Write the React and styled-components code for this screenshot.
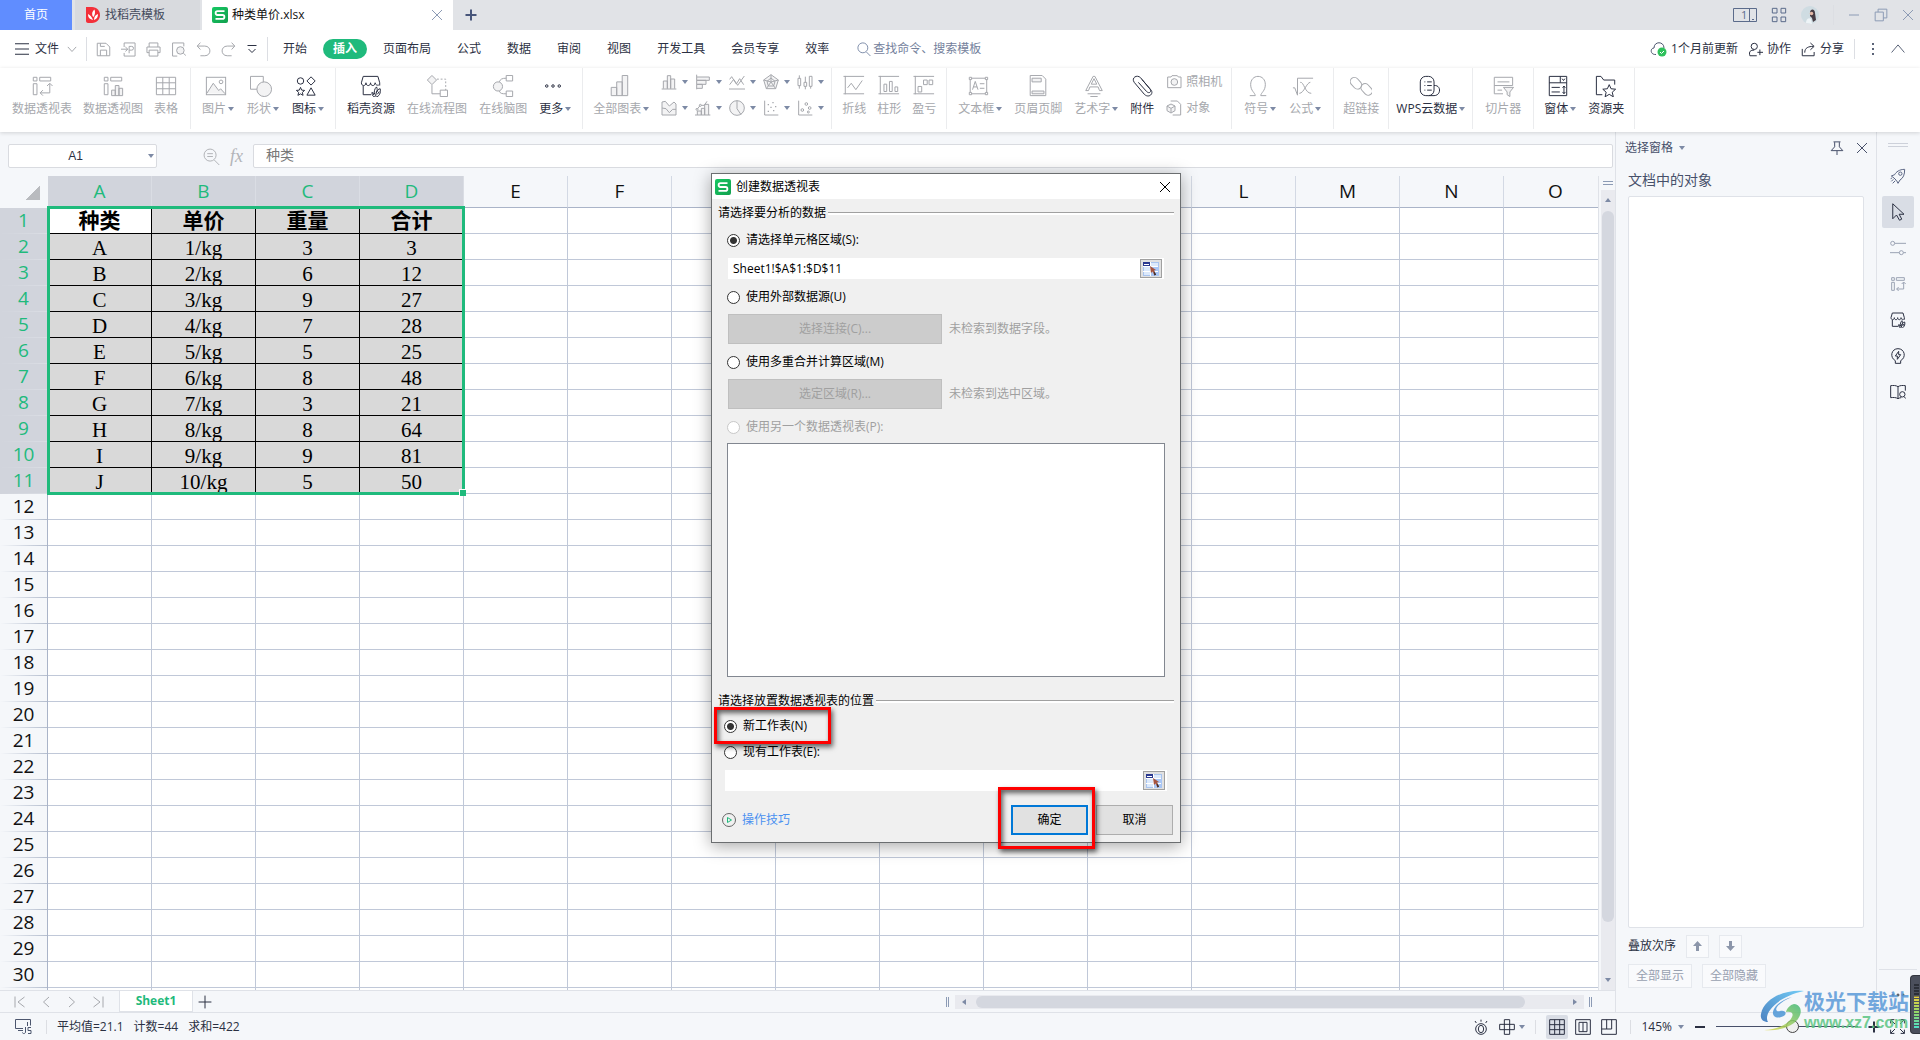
import React from 'react';
import styled, { createGlobalStyle, css } from 'styled-components';

const GREEN = '#1fba7c';
const DARK = '#2b3042';
const DIM = '#a6a8ad';

const rows = [
    ['种类', '单价', '重量', '合计'],
    ['A', '1/kg', '3', '3'],
    ['B', '2/kg', '6', '12'],
    ['C', '3/kg', '9', '27'],
    ['D', '4/kg', '7', '28'],
    ['E', '5/kg', '5', '25'],
    ['F', '6/kg', '8', '48'],
    ['G', '7/kg', '3', '21'],
    ['H', '8/kg', '8', '64'],
    ['I', '9/kg', '9', '81'],
    ['J', '10/kg', '5', '50'],
];
const columns = 'ABCDEFGHIJKLMNO'.split('');
const ROW_COUNT = 30;

const GlobalStyle = createGlobalStyle`
    * { box-sizing: border-box; }
    body {
        margin: 0;
        font-family: "Open Sans", "Noto Sans CJK SC", sans-serif;
        font-size: 12px;
        line-height: 16px;
        color: ${DARK};
        background: #f5f7fa;
        overflow: hidden;
    }
    button, input { font: inherit; color: inherit; }
    button {
        border: 0;
        padding: 0;
        margin: 0;
        background: none;
        white-space: nowrap;
    }
    a { text-decoration: none; }
    svg { display: block; flex: none; }
`;

/* drawings, all on a 24 x 24 board */
const leaf = (
    <path d="M17 24c-3 0-4-2-4-5 1 0 2 1 3 2-1-3 0-6 2-8 1 2 1 4 0 6 1-2 2-4 4-4 1 4-1 9-5 9zM17 23l1-5M15 22l-1-2M19 21l2-3" />
);
const icons = {
    pivot: <path d="M2.5 2.5h4v4h-4zM9.5 2.5h12v4h-12zM2.5 9.5h4v12h-4zM10 19.5h10.500v-10M10 19.5l3-3M10 19.5l3 3M20.5 9l-3 3M20.5 9l3 3" />,
    pivotChart: <><path d="M2.5 2.5h4v4h-4zM9.5 2.5h12v4h-12zM2.5 9.5h4v12h-4z" /><path className="f" d="M10.5 16.5h4v6h-4zM14.5 11.5h4v11h-4zM18.5 14.5h4v8h-4z" /></>,
    table: <path d="M1.5 2.5h21v19h-21zM1.5 8.5h21M1.5 15h21M8.5 2.5v19M15.5 2.5v19" />,
    picture: <><rect x="1.5" y="2.5" width="21" height="19" /><path className="f" d="M2 20l7-11 6 8 2-2 5 5.500" /><circle cx="17.5" cy="7.5" r="2" /></>,
    shape: <><path d="M.5 1.5h14v14h-14z" /><circle className="f" cx="15.5" cy="15.5" r="8" /></>,
    symbols: <><circle cx="6" cy="6.5" r="3.5" /><path d="M17.5 2l4.500 4.500-4.500 4.500-4.500-4.500zM6 13.5l1.300 3 3.200.3-2.500 2.200.8 3.200L6 20.6l-2.800 1.600.8-3.200-2.500-2.200 3.200-.3zM17.5 14l4.500 8h-9z" /></>,
    store: <><path d="M12 21.5H3.5V12M1.5 8.5l2-7h16l2 7v3M1.5 8.5c0 4 5 4 5 0 0 4 5 4 5 0 0 4 5 4 5 0 0 2 2 3 4 2.500" />{leaf}</>,
    flow: <><path className="f" d="M6.5 .5l5 5-5 5-5-5z" /><path strokeDasharray="2 2" d="M12 4.5h9.500v12" /><path d="M6.5 11v9.500h9M15.5 16.5h8v7h-8z" /></>,
    mind: <><circle className="f" cx="6.5" cy="12.5" r="5" /><path d="M8 7.5c1-3 3-4 7.500-4M8 17.5c1 3 3 3 7.500 3M15.5 .5h7v6h-7zM15.5 17.5h7v6h-7z" /></>,
    more: <><circle cx="4.5" cy="12" r="1.500" /><circle cx="12" cy="12" r="1.500" /><circle cx="19.5" cy="12" r="1.500" /></>,
    charts: <path className="f" d="M3.5 13.5h6v9h-6zM9.5 7.5h6v15h-6zM15.5 .5h6v22h-6z" />,
    line: <path d="M.5 1.5h22.500M2.5 1v20M.5 20.5h22.500M5 14l4-5 5 7 7-10" />,
    column: <path d="M.5 1.5h22.500M2.5 1v20M.5 20.5h22.500M6.5 18v-8h3v8zM12.5 18v-11h3v11zM18.5 18v-5h3v5z" />,
    winloss: <path d="M.5 1.5h22.500M2.5 1v20M.5 20.5h22.500M5.5 12.5h4v6h-4zM11.5 5.5h4v5h-4zM17.5 5.5h4v5h-4z" />,
    textbox: <><path d="M3.5 3.5h18v17h-18z" /><path className="w" d="M2.5 2.5H5V5H2.5zM20 2.5h2.500V5H20zM2.5 19H5v2.500H2.5zM20 19h2.500v2.500H20z" /><path d="M6 16l3-9 3 9M7 13h4M14 9.5h5M14 14.5h5" /></>,
    header: <><path d="M3.5 .5h13l4 4v18h-17z" /><path className="f" d="M5.5 3.5h10v4h-10zM5.5 17.5h13v3h-13z" /></>,
    wordart: <path d="M3 17L11 1.5h2L21 17h-3l-1.500-4h-9L6 17zM9 10h6l-3-6zM5 20.5h14M8 23.5h8" />,
    clip: <path d="M8 8l9 10c3 3 6 0 3.500-3L10.5 3C6.5-1 0 3 3.500 8l11 13c5 5 11-1 7-5L12 5" />,
    omega: <path d="M3 22.5h6c0-3-5-5-5-12C4 5 7.5 1.500 12 1.500S20 5 20 10.5c0 7-5 9-5 12h6" />,
    formula: <path d="M1 14h2l3 8V3.500h17M9 8c4-1 5 12 12 12M20 8c-4 0-7 12-12 12" />,
    link: <><rect x="2" y="2" width="9" height="14" rx="4.500" transform="rotate(-42 6.500 9)" /><rect x="13" y="9" width="9" height="14" rx="4.500" transform="rotate(-42 17.500 15)" /></>,
    cloudData: <><rect x="2.5" y="1.5" width="15" height="21" rx="6" /><path d="M17.5 11.5c8-1 8 11 0 11h-6M7 7.5h1M10 7.5h5M7 11.5h1M10 11.5h5M7 16.5h1M10 16.5h5" /></>,
    slicer: <><path d="M12 20.5H2.500V2.500h20v9M6 7.5h13M2.5 11.5h20M6 16.5h5" /><path className="f" d="M12.5 13.5h11l-4 5v5l-3-2v-3z" /></>,
    form: <path d="M2.5 1.5h19v21h-19zM2.5 8.5h19M14.5 1.5v7M16.5 4l1.500 2 1.500-2M5 13.5h9M5 18.5h9M18.5 12v8M17 14l1.500-2 1.500 2M17 18.5l1.500 2 1.500-2" />,
    folder: <><path d="M8 21.5H1.500V1.500h5l3 4h12v5" /><path d="M15.5 10.5l2 4.500 5 .5-3.700 3.300 1.200 5-4.500-2.700-4.500 2.700 1.200-5-3.700-3.300 5-.5z" /></>,
    camera: <><path d="M2.5 4.5h5l1.500-2h8l1.500 2h4v16h-20z" /><circle className="f" cx="12.5" cy="12" r="5" /></>,
    object: <><path d="M7 1.500h10l5 5v16H10" /><path className="f" d="M7.500 6l6 3v7l-6 3.500-6-3.500V9zM1.500 9l6 3.500 6-3.500M7.500 12.500V19" /></>,
    miniBar: <path className="f" d="M1 22.5h22M3.5 22V10.500h6V22M9.5 22V2.500h5V22M14.5 22V7.500h6V22" />,
    miniH: <path className="f" d="M2.5 1v22M3 4.5h18.500v5H3M3 9.500h13.500v6H3M3 15.5h8v6H3" />,
    miniLine: <path d="M0 22.5h24M1 16l6-8 6 9L23 3M1 8l3-4 7 11 5-8 6 9" />,
    radar: <><path className="f" d="M12 1l11 8-4 13H5L1 9z" /><path d="M12 6l6 5-2 7H8l-2-7zM12 1v11l11-3M12 12l7 10M12 12L5 22M12 12L1 9" /></>,
    stock: <path d="M1.5 6.5h4v11h-4zM3.5 2v4.500M3.5 17.5V22M10.5 12.5h4v6h-4zM12.5 4v8.500M12.5 18.5V23M18.5 3.5h4v15h-4zM20.5 18.5V22" />,
    area: <><path className="f" d="M1.5 22.5V3l5-1 6 7 7-6 3 3v16.500z" /><path d="M1.5 12l6 1 5 6 5-5h5" /></>,
    combo: <><path className="f" d="M3.5 22.5v-6h6v6M9.5 22.5v-10h5v10M14.5 22.5v-16h6v16" /><path d="M0 22.5h23M3 14l5-6h6l4-6" /><circle className="w" cx="3" cy="14" r="1.500" /><circle className="w" cx="8" cy="8" r="1.500" /></>,
    pie: <><circle className="f" cx="12" cy="12" r="11" /><path d="M12 1v12l6 9" /></>,
    scatter: <><path d="M2.5 1v21.500H23" /><path d="M7 7h2M14 4h2M11 11h2M18 10h2M7 17h2M15 16h2" strokeWidth="2" /></>,
    bubble: <><path d="M2.5 1v21.500H23" /><circle cx="8" cy="15" r="2" /><circle cx="14" cy="6" r="2" /><circle cx="19" cy="12" r="2" /><circle cx="17" cy="18" r="1.500" /></>,
    save: <path d="M2 2h14l6 6v14H2zM7 22v-9h10v9M7 2v5h7" />,
    exportPdf: <path d="M5 8V1.500h17.500v21H5v-5M0 11.500h10M7 8l4 3.500L7 15M13 18V7h4a3 3 0 010 6h-4" />,
    print: <path d="M5 8V1.500h14V8M5 17H1.500V8h21v9H19M5 13h14v9.500H5z" />,
    preview: <><path d="M10 22.500H2.500v-21h18V7M20 18l4 4" /><circle className="f" cx="15" cy="13.500" r="6" /></>,
    undo: <path d="M7 1L2 6.500 7 12M2 6.500h12c11 0 11 15.500 0 15.500H7" />,
    redo: <path d="M17 1l5 5.500-5 5.500M22 6.500H10c-11 0-11 15.500 0 15.500h7" />,
    quick: <path d="M3 5h18M5 12l7 7 7-7" />,
    burger: <path d="M0 3h24M0 12h24M0 21h24" />,
    down: <path d="M2 7l10 11L22 7" />,
    up: <path d="M1 18L12 5l11 13" />,
    search: <><circle cx="10" cy="10" r="8.500" /><path d="M16 17l7 7" /></>,
    zoomOut: <><circle cx="10" cy="10" r="8.500" /><path d="M16 17l7 7M6 8h8M6 12h8" /></>,
    person: <><circle cx="10" cy="7" r="5" /><path d="M14 22H3c-2-7 1-9 7-9M19 12v9M15 16.500h9" /></>,
    share: <path d="M2 11v11h19v-6M6 17c0-8 6-10 14-10M15 1.500l6 5.500-6 5.500" />,
    apps: <path d="M2 2h7v7H2zM15 2h7v7h-7zM2 15h7v7H2zM15 15h7v7h-7z" />,
    minimize: <path d="M2 12h20" />,
    restore: <path d="M2 7h14v15H2zM7 7V2h15v15h-6" />,
    close: <path d="M2 2l20 20M22 2L2 22" />,
    plus: <path d="M12 1v22M1 12h22" />,
    pin: <path d="M6 1.500h12M8 2v8l-6 6.500h20L16 10V2M12 17v7" />,
    rocket: <><path d="M22 2C14 2 9 6 7 10l-5 2 4 3 4 4 2 4 3-5c5-3 7-8 7-16zM5 17l-3 3M8 19l-4 4M1 16l2-1" /><circle cx="15.500" cy="8.500" r="2.500" /></>,
    pointer: <path d="M5 1v20l5-5 4 7 3-1.500-3.500-6.500H20z" />,
    sliders: <><circle cx="4" cy="5" r="3" /><path d="M7 5h17M0 19h14M20 19h4" /><circle cx="17" cy="19" r="3" /></>,
    bulb: <path d="M8 23v-4C-1 14 2 1 12 1s13 13 4 18v4zM13 5l-5 7h3v5l5-7h-3z" />,
    book: <><path d="M12 4C9 2 5 2 1 2.500v18c4-.5 8-.5 11 1.500V4c3-2 7-2 11-1.500V10M12 22c2-1 3-1.500 5-1.500" /><circle cx="18.500" cy="15.500" r="4" /><path d="M21 19l3 3" /></>,
    first: <path d="M2 1v22M21 2L8 12l13 10" />,
    prev: <path d="M18 2L7 12l11 10" />,
    next: <path d="M6 2l11 10L6 22" />,
    last: <path d="M22 1v22M3 2l13 10L3 22" />,
    eye: <><circle cx="12" cy="15" r="8" /><ellipse cx="12" cy="15" rx="4" ry="5.500" /><path d="M12 1v3M3 3l2 3M21 3l-2 3" /></>,
    cross: <path d="M8 1h8v22H8zM1 8h22v8H1z" />,
    gridView: <path d="M1 1h22v22H1zM1 8.500h22M1 16h22M8.500 1v22M16 1v22" />,
    pageView: <path d="M1 1h22v22H1zM6 5h12v14H6zM12 5v14" />,
    splitView: <path d="M1 1h22v22H1zM1 15h15V1M8.500 1v14" />,
    full: <path d="M1 7V1h6M1 1l7 7M17 1h6v6M23 1l-7 7M1 17v6h6M1 23l7-7M23 17v6h-6M23 23l-7-7" />,
};

const Svg = styled.svg`
    fill: none;
    stroke: currentColor;
    .f { fill: #f3f3f4; }
    .w { fill: #fff; }
`;

/* keeps the stroke about one pixel wide whatever the size */
const Icon = ({ name, size = 24, weight = 1 }) => (
    <Svg width={size} height={size} viewBox="0 0 24 24" strokeWidth={(24 / size) * weight} aria-hidden="true">
        {icons[name]}
    </Svg>
);

const Caret = styled.i`
    flex: none;
    width: 0;
    height: 0;
    border: 3px solid transparent;
    border-bottom-width: 0;
    border-top: 4px solid #7d8aa5;
    ${({ $dir }) => $dir === 'up' && css`transform: rotate(180deg);`}
    ${({ $dir }) => $dir === 'left' && css`transform: rotate(90deg);`}
    ${({ $dir }) => $dir === 'right' && css`transform: rotate(-90deg);`}
`;

const SheetLogo = ({ size = 16 }) => (
    <svg width={size} height={size} viewBox="0 0 16 16" aria-hidden="true">
        <defs>
            <linearGradient id="sheetGreen" x1="0" y1="0" x2="1" y2="1">
                <stop offset="0" stopColor="#16c863" />
                <stop offset="1" stopColor="#12a04e" />
            </linearGradient>
        </defs>
        <rect width="16" height="16" rx="2" fill="url(#sheetGreen)" />
        <path d="M12.500 4.200H5.500a1.900 1.900 0 000 3.800h5a1.900 1.900 0 010 3.800H3.500" fill="none" stroke="#fff" strokeWidth="1.800" />
    </svg>
);

const App = () => (
    <Page>
        <GlobalStyle />
        <TitleBar />
        <MenuBar />
        <Ribbon />
        <Main>
            <Workbook />
            <SelectionPane />
            <SideRail />
        </Main>
        <StatusBar />
        <PivotDialog />
        <Watermark />
    </Page>
);
export default App;

const Page = styled.div`
    position: relative;
    display: flex;
    flex-direction: column;
    height: 100vh;
    overflow: hidden;
`;
const Main = styled.main`
    flex: 1;
    min-height: 0;
    display: flex;
`;
const Spacer = styled.div`
    flex: 1;
`;
const Rule = styled.span`
    flex: none;
    width: 1px;
    height: ${({ $h }) => $h || 20}px;
    background: #dcdee3;
`;
const Tool = styled.button`
    display: flex;
    align-items: center;
    gap: ${({ $gap }) => $gap || 4}px;
    padding: 0 ${({ $pad }) => $pad || 0}px;
    color: ${({ $color }) => $color || DARK};
`;

/* title bar */
const TitleBar = () => (
    <Titles>
        <HomeTab>首页</HomeTab>
        <DocTab>
            <svg width="16" height="16" viewBox="0 0 16 16" aria-hidden="true">
                <path d="M1 0h6c5 0 8 4 8 8s-3 8-8 8H3c-1 0-2-1-2-2z" fill="#f3303a" />
                <path d="M8 13C4 12 3 10 3 7c2 1 4 3 5 6zM7.500 9C6.500 6 7.500 4 9.500 2.500 10.500 5 10 8 8.500 10zM9 13c0-3 1-5 4-6 0 3-1 5-4 6z" fill="#fff" />
            </svg>
            找稻壳模板
        </DocTab>
        <DocTab $active>
            <SheetLogo />
            种类单价.xlsx
            <Spacer />
            <Tool aria-label="关闭标签" $color="#8c9bb5"><Icon name="close" size={12} /></Tool>
        </DocTab>
        <NewTab aria-label="新建"><Icon name="plus" size={12} weight={2} /></NewTab>
        <Spacer />
        <WindowTools>
            <Tool aria-label="窗口" $color="#5b6b8b">
                <svg width="24" height="14" viewBox="0 0 24 14" fill="none" stroke="currentColor" aria-hidden="true">
                    <path d="M.5 .5h23v13H.5zM16.5 .5v13M19 11.5h2" />
                    <text x="8" y="11" fontSize="11" fill="currentColor" stroke="none">1</text>
                </svg>
            </Tool>
            <Tool aria-label="应用" $color="#5b6b8b"><Icon name="apps" size={16} /></Tool>
            <svg width="18" height="18" viewBox="0 0 18 18" aria-hidden="true">
                <circle cx="9" cy="9" r="9" fill="#cfdce2" />
                <path d="M9 6c1-4 5-3 5 1l1 7-3 2-1-4-2-2z" fill="#463c44" />
                <circle cx="10.500" cy="7.500" r="1.800" fill="#e3b9a8" />
                <path d="M5 17c0-4 3-6 5-4l1 5z" fill="#eef4f7" />
            </svg>
            <Rule />
            <Tool aria-label="最小化" $color="#8c9bb5"><Icon name="minimize" size={12} /></Tool>
            <Tool aria-label="还原" $color="#8c9bb5"><Icon name="restore" size={14} /></Tool>
            <Tool aria-label="关闭" $color="#8c9bb5"><Icon name="close" size={12} /></Tool>
        </WindowTools>
    </Titles>
);
const Titles = styled.header`
    display: flex;
    align-items: stretch;
    height: 30px;
    background: #e1e3e7;
`;
const HomeTab = styled.button`
    width: 72px;
    margin-right: 3px;
    background: #608dff;
    color: #fff;
`;
const DocTab = styled.div`
    display: flex;
    align-items: center;
    gap: 4px;
    width: ${({ $active }) => ($active ? 251 : 125)}px;
    margin-right: ${({ $active }) => ($active ? 0 : 2)}px;
    padding: 0 10px;
    background: ${({ $active }) => ($active ? '#fff' : '#d8dade')};
    color: ${({ $active }) => ($active ? '#111' : '#444a5c')};
`;
const NewTab = styled.button`
    padding: 0 12px;
    color: #47557a;
`;
const WindowTools = styled.div`
    display: flex;
    align-items: center;
    gap: 14px;
    padding-right: 6px;
`;

/* menu row */
const tabs = ['开始', '插入', '页面布局', '公式', '数据', '审阅', '视图', '开发工具', '会员专享', '效率'];
const quickTools = [
    ['save', '保存'],
    ['exportPdf', '输出为PDF'],
    ['print', '打印'],
    ['preview', '打印预览'],
    ['undo', '撤销'],
    ['redo', '恢复'],
];
const MenuBar = () => (
    <Menu>
        <FileButton><Icon name="burger" size={14} />文件<Icon name="down" size={10} /></FileButton>
        <Rule $h={24} />
        <QuickTools>
            {quickTools.map(([icon, label]) => (
                <Tool key={icon} aria-label={label} $color={DIM}><Icon name={icon} size={15} /></Tool>
            ))}
            <Tool aria-label="自定义"><Icon name="quick" size={12} /></Tool>
        </QuickTools>
        <Rule $h={24} />
        <Tabs>
            {tabs.map((t) => <MenuTab key={t} $on={t === '插入'}>{t}</MenuTab>)}
        </Tabs>
        <Search>
            <Icon name="search" size={14} />
            <input type="text" aria-label="搜索" placeholder="查找命令、搜索模板" />
        </Search>
        <Spacer />
        <MenuRight>
            <Tool>
                <svg width="17" height="16" viewBox="0 0 17 16" fill="none" aria-hidden="true">
                    <path d="M6 13.500C0 14 0 7 4 7c0-7 10-7 10 0" stroke="#4c566e" />
                    <circle cx="12" cy="11" r="4.500" fill="#2fc15c" />
                    <path d="M10 11l1.500 1.500L14 10" stroke="#fff" />
                </svg>
                1个月前更新
            </Tool>
            <Tool><Icon name="person" size={15} />协作</Tool>
            <Tool><Icon name="share" size={15} />分享</Tool>
            <Rule />
            <Tool aria-label="更多选项" $pad={6}>
                <svg width="4" height="14" viewBox="0 0 4 14" aria-hidden="true"><path d="M1 1h2v2H1zM1 6h2v2H1zM1 11h2v2H1z" fill="#5b6478" /></svg>
            </Tool>
            <Tool aria-label="收起功能区" $color="#5b6478"><Icon name="up" size={14} /></Tool>
        </MenuRight>
    </Menu>
);
const Menu = styled.nav`
    display: flex;
    align-items: center;
    height: 38px;
    padding: 0 15px;
    background: #fff;
`;
const FileButton = styled(Tool)`
    gap: 6px;
    margin-right: 9px;
    svg:last-child {
        margin-left: 2px;
        color: ${DIM};
    }
`;
const QuickTools = styled.div`
    display: flex;
    align-items: center;
    gap: 10px;
    padding: 0 9px;
`;
const Tabs = styled.div`
    display: flex;
    gap: 6px;
    padding-left: 5px;
`;
const MenuTab = styled.button`
    height: 20px;
    padding: 0 10px;
    border-radius: 10px;
    ${({ $on }) => $on && css`
        background: ${GREEN};
        color: #fff;
        font-weight: bold;
    `}
`;
const Search = styled.label`
    display: flex;
    align-items: center;
    gap: 2px;
    margin-left: 18px;
    color: #8190ac;
    input {
        width: 130px;
        padding: 0;
        border: 0;
        outline: 0;
        background: none;
    }
    input::placeholder { color: #74819c; }
`;
const MenuRight = styled.div`
    display: flex;
    align-items: center;
    gap: 10px;
`;

/* ribbon */
const miniCharts = [
    ['miniBar', '柱形图'],
    ['miniH', '条形图'],
    ['miniLine', '折线图'],
    ['radar', '雷达图'],
    ['stock', '股价图'],
    ['area', '面积图'],
    ['combo', '组合图'],
    ['pie', '饼图'],
    ['scatter', '散点图'],
    ['bubble', '气泡图'],
];
const groups = [
    { gap: 11, pad: 12, items: [['pivot', '数据透视表'], ['pivotChart', '数据透视图'], ['table', '表格']] },
    { gap: 13, pad: 11, items: [['picture', '图片', 0, 1], ['shape', '形状', 0, 1], ['symbols', '图标', 1, 1]] },
    { gap: 12, pad: 11, items: [['store', '稻壳资源', 1], ['flow', '在线流程图'], ['mind', '在线脑图'], ['more', '更多', 1, 1]] },
    { gap: 12, pad: 10, items: [['charts', '全部图表', 0, 1]], minis: true },
    { gap: 11, pad: 10, items: [['line', '折线'], ['column', '柱形'], ['winloss', '盈亏']] },
    { gap: 12, pad: 11, items: [['textbox', '文本框', 0, 1], ['header', '页眉页脚'], ['wordart', '艺术字', 0, 1], ['clip', '附件', 1]], stack: true },
    { gap: 13, pad: 12, items: [['omega', '符号', 0, 1], ['formula', '公式', 0, 1]] },
    { gap: 12, pad: 9, items: [['link', '超链接']] },
    { gap: 12, pad: 7, items: [['cloudData', 'WPS云数据', 1, 1]] },
    { gap: 12, pad: 12, items: [['slicer', '切片器']] },
    { gap: 12, pad: 10, items: [['form', '窗体', 1, 1], ['folder', '资源夹', 1]] },
];
const Ribbon = () => (
    <RibbonBar>
        {groups.map((g) => (
            <Group key={g.items[0][1]} $gap={g.gap} $pad={g.pad}>
                {g.items.map(([icon, label, on, drop]) => (
                    <RibbonButton key={label} $on={on}>
                        <IconSlot $drop={drop}><Icon name={icon} size={icon === 'more' ? 20 : 22} /></IconSlot>
                        <Caption>{label}{drop ? <Caret /> : null}</Caption>
                    </RibbonButton>
                ))}
                {g.minis && (
                    <MiniGrid>
                        {miniCharts.map(([icon, label]) => (
                            <Tool key={icon} aria-label={label} $color={DIM} $gap={5}><Icon name={icon} size={16} /><Caret /></Tool>
                        ))}
                    </MiniGrid>
                )}
                {g.stack && (
                    <Stack>
                        <Tool $color={DIM}><Icon name="camera" size={16} />照相机</Tool>
                        <Tool $color={DIM}><Icon name="object" size={16} />对象</Tool>
                    </Stack>
                )}
            </Group>
        ))}
    </RibbonBar>
);
const RibbonBar = styled.div`
    position: relative;
    z-index: 1;
    display: flex;
    height: 64px;
    padding-bottom: 3px;
    background: #fff;
    box-shadow: 0 1px 4px rgba(0, 0, 0, 0.15);
`;
const Group = styled.div`
    display: flex;
    gap: ${({ $gap }) => $gap}px;
    padding: 6px ${({ $pad }) => $pad}px 0;
    border-right: 1px solid #ebecee;
`;
const RibbonButton = styled.button`
    display: flex;
    flex-direction: column;
    align-items: center;
    gap: 4px;
    height: 44px;
    color: ${({ $on }) => ($on ? DARK : DIM)};
`;
const IconSlot = styled.span`
    display: flex;
    align-items: center;
    height: 23px;
    padding-right: ${({ $drop }) => ($drop ? 4 : 0)}px;
`;
const Caption = styled.span`
    display: flex;
    align-items: center;
    gap: 2px;
`;
const MiniGrid = styled.div`
    display: grid;
    grid-template-columns: repeat(5, 34px);
    grid-template-rows: 16px 16px;
    row-gap: 10px;
    margin-right: -10px;
`;
const Stack = styled.div`
    display: flex;
    flex-direction: column;
    gap: 10px;
    margin-right: -2px;
`;

/* workbook */
const Workbook = () => (
    <Book>
        <FormulaBar>
            <NameBox>
                <input type="text" aria-label="名称框" defaultValue="A1" />
                <Caret />
            </NameBox>
            <FxTools>
                <Icon name="zoomOut" size={17} />
                <Fx>fx</Fx>
            </FxTools>
            <FormulaInput type="text" aria-label="编辑栏" defaultValue="种类" />
        </FormulaBar>
        <SheetArea>
            <GridWrap>
                <Grid>
                    <thead>
                        <tr>
                            <Corner scope="col" aria-label="全选" />
                            {columns.map((c, i) => <ColHead key={c} scope="col" $on={i < 4}>{c}</ColHead>)}
                        </tr>
                    </thead>
                    <tbody>
                        {Array.from({ length: ROW_COUNT + 1 }, (_, r) => (
                            <tr key={r}>
                                <RowHead scope="row" $on={r < rows.length}>{r < ROW_COUNT ? r + 1 : ''}</RowHead>
                                {columns.map((c, i) => {
                                    const filled = r < rows.length && i < 4;
                                    return (
                                        <Cell key={c} $filled={filled} $current={r === 0 && i === 0}>
                                            {filled && <CellText $bold={r === 0}>{rows[r][i]}</CellText>}
                                        </Cell>
                                    );
                                })}
                            </tr>
                        ))}
                    </tbody>
                </Grid>
                <Selection />
            </GridWrap>
            <VScroll>
                <SplitHandle />
                <VTrack>
                    <Caret $dir="up" />
                    <VThumb />
                    <Caret />
                </VTrack>
            </VScroll>
        </SheetArea>
        <SheetBar>
            <SheetNav>
                <Tool aria-label="第一张" $color={DIM}><Icon name="first" size={12} /></Tool>
                <Tool aria-label="上一张" $color={DIM}><Icon name="prev" size={12} /></Tool>
                <Tool aria-label="下一张" $color={DIM}><Icon name="next" size={12} /></Tool>
                <Tool aria-label="最后一张" $color={DIM}><Icon name="last" size={12} /></Tool>
            </SheetNav>
            <SheetTab>Sheet1</SheetTab>
            <Tool aria-label="新建工作表"><Icon name="plus" size={14} /></Tool>
            <Spacer />
            <Grip />
            <HTrack>
                <Caret $dir="left" />
                <HThumb />
                <Spacer />
                <Caret $dir="right" />
            </HTrack>
            <Grip />
        </SheetBar>
    </Book>
);
const Book = styled.section`
    flex: 1;
    min-width: 0;
    display: flex;
    flex-direction: column;
    border-right: 1px solid #dfe2e8;
`;
const FormulaBar = styled.div`
    display: flex;
    align-items: center;
    height: 44px;
    padding: 4px 2px 0 8px;
`;
const box = css`
    height: 24px;
    border: 1px solid #d9dbe0;
    border-radius: 2px;
    background: #fff;
`;
const NameBox = styled.div`
    ${box}
    display: flex;
    align-items: center;
    width: 149px;
    padding-right: 2px;
    input {
        flex: 1;
        min-width: 0;
        padding: 0 6px 0 0;
        border: 0;
        outline: 0;
        background: none;
        text-align: center;
        font-family: "Liberation Sans", sans-serif;
    }
`;
const FxTools = styled.div`
    display: flex;
    align-items: center;
    gap: 10px;
    width: 96px;
    padding-left: 46px;
    color: #b2b4b8;
`;
const Fx = styled.span`
    font-family: "Liberation Serif", serif;
    font-style: italic;
    font-size: 18px;
`;
const FormulaInput = styled.input`
    ${box}
    flex: 1;
    min-width: 0;
    padding: 0 12px 4px;
    font-size: 14px;
    color: #777;
    outline: 0;
`;
const SheetArea = styled.div`
    flex: 1;
    min-height: 0;
    display: flex;
`;
const GridWrap = styled.div`
    position: relative;
    flex: 1;
    min-width: 0;
    overflow: hidden;
    background: #fff;
`;
const Grid = styled.table`
    table-layout: fixed;
    width: 1608px;
    border-collapse: separate;
    border-spacing: 0;
    th, td { padding: 0; }
`;
const Corner = styled.th`
    width: 48px;
    height: 32px;
    background: linear-gradient(135deg, transparent 50%, #b9bbbf 50%) 25px 9px / 15px 15px no-repeat #f5f7fa;
`;
const ColHead = styled.th`
    width: 104px;
    height: 32px;
    border-right: 1px solid ${({ $on }) => ($on ? '#dadde4' : '#d3d9e4')};
    border-bottom: 1px solid #aab4c8;
    background: ${({ $on }) => ($on ? '#d1d4dc' : '#f5f7fa')};
    color: ${({ $on }) => ($on ? GREEN : '#111')};
    font-size: 19px;
    font-weight: normal;
    line-height: 31px;
`;
const RowHead = styled.th`
    height: 26px;
    border-right: 1px solid #aab4c8;
    background:
        linear-gradient(to right, transparent, ${({ $on }) => ($on ? '#dadde4' : '#b4bdce')}) bottom / 100% 1px no-repeat
        ${({ $on }) => ($on ? '#d1d4dc' : '#f5f7fa')};
    color: ${({ $on }) => ($on ? GREEN : '#111')};
    font-size: 19px;
    font-weight: normal;
    line-height: 24px;
    vertical-align: top;
`;
const Cell = styled.td`
    height: 26px;
    border-right: 1px solid ${({ $filled }) => ($filled ? '#000' : '#c0c8d8')};
    border-bottom: 1px solid ${({ $filled }) => ($filled ? '#000' : '#c0c8d8')};
    background: ${({ $filled, $current }) => ($filled && !$current ? '#d9d9d9' : '#fff')};
`;
const CellText = styled.div`
    height: 25px;
    text-align: center;
    font-family: "Liberation Serif", "Noto Sans CJK SC", serif;
    font-size: 21px;
    font-weight: ${({ $bold }) => ($bold ? 'bold' : 'normal')};
    line-height: ${({ $bold }) => ($bold ? 26 : 29)}px;
    color: #000;
`;
/* frame over A1:D11 */
const Selection = styled.div`
    position: absolute;
    left: 47px;
    top: 30px;
    width: 418px;
    height: 289px;
    border: 3px solid ${GREEN};
    &::after {
        content: '';
        position: absolute;
        right: -4px;
        bottom: -4px;
        width: 6px;
        height: 6px;
        background: ${GREEN};
        border: 1px solid #fff;
        border-width: 1px 0 0 1px;
    }
`;
const VScroll = styled.div`
    display: flex;
    flex-direction: column;
    width: 17px;
    padding-left: 2px;
    border-left: 1px solid #dfe2e8;
`;
const SplitHandle = styled.div`
    width: 10px;
    height: 4px;
    margin: 5px 2px;
    border: 1px solid #8c9bb5;
    border-width: 1px 0;
`;
const VTrack = styled.div`
    flex: 1;
    display: flex;
    flex-direction: column;
    align-items: center;
    justify-content: space-between;
    padding: 8px 0;
    background: #e9eaef;
`;
const VThumb = styled.div`
    flex: 1;
    width: 12px;
    margin: 9px 0 56px;
    border-radius: 6px;
    background: #d4d7df;
`;
const SheetBar = styled.div`
    display: flex;
    align-items: center;
    height: 22px;
    padding-right: 23px;
    border-top: 1px solid #dfe2e8;
`;
const SheetNav = styled.div`
    display: flex;
    gap: 14px;
    width: 119px;
    padding-left: 14px;
`;
const SheetTab = styled.button`
    width: 74px;
    height: 21px;
    margin-right: 5px;
    border: 1px solid #dfe2e8;
    border-top: 0;
    background: #fff;
    color: ${GREEN};
    font-weight: bold;
`;
const Grip = styled.span`
    width: 3px;
    height: 10px;
    border: 1px solid #8c9bb5;
    border-width: 0 1px;
`;
const HTrack = styled.div`
    display: flex;
    align-items: center;
    width: 39.5%;
    height: 14px;
    margin: 0 5px 0 6px;
    padding: 0 6px;
    background: #e9eaef;
`;
const HThumb = styled.div`
    width: 89%;
    height: 12px;
    margin-left: 9px;
    border-radius: 6px;
    background: #d4d7df;
`;

/* selection pane */
const SelectionPane = () => (
    <Pane>
        <PaneTitle>
            选择窗格<Caret />
            <Spacer />
            <Tool aria-label="固定" $color="#47506a"><Icon name="pin" size={14} /></Tool>
            <Tool aria-label="关闭窗格" $color="#47506a"><Icon name="close" size={12} /></Tool>
        </PaneTitle>
        <PaneHeading>文档中的对象</PaneHeading>
        <ObjectList />
        <PaneRow>
            叠放次序
            <MoveButton aria-label="上移">
                <svg width="9" height="10" viewBox="0 0 9 10" aria-hidden="true"><path d="M4.500 0L9 5H6v5H3V5H0z" fill="#8c96aa" /></svg>
            </MoveButton>
            <MoveButton aria-label="下移">
                <svg width="9" height="10" viewBox="0 0 9 10" aria-hidden="true"><path d="M4.500 10L9 5H6V0H3v5H0z" fill="#8c96aa" /></svg>
            </MoveButton>
        </PaneRow>
        <PaneRow>
            <PaneButton>全部显示</PaneButton>
            <PaneButton>全部隐藏</PaneButton>
        </PaneRow>
    </Pane>
);
const Pane = styled.aside`
    display: flex;
    flex-direction: column;
    width: 261px;
    padding: 6px 12px 24px;
    border-right: 1px solid #dfe2e8;
`;
const PaneTitle = styled.div`
    display: flex;
    align-items: center;
    gap: 6px;
    height: 20px;
    margin-left: -3px;
    color: #47506a;
    button:last-child { margin: 0 -4px 0 6px; }
`;
const PaneHeading = styled.h2`
    margin: 12px 0 6px;
    font-size: 14px;
    font-weight: normal;
    line-height: 20px;
    color: #47506a;
`;
const ObjectList = styled.div`
    flex: 1;
    border: 1px solid #dfe2e8;
    border-radius: 2px;
    background: #fff;
`;
const PaneRow = styled.div`
    display: flex;
    align-items: center;
    gap: 10px;
    height: 24px;
    margin-top: 6px;
`;
const MoveButton = styled.button`
    display: grid;
    place-items: center;
    width: 23px;
    height: 23px;
    border: 1px solid #e6e9ee;
    background: #f9fafc;
`;
const PaneButton = styled.button`
    width: 64px;
    height: 24px;
    border: 1px solid #e6e9ee;
    background: #f9fafc;
    color: #98a0b0;
`;

const SideRail = () => (
    <Rail>
        <RailHandle />
        <RailButton aria-label="推荐" $color="#5b6684"><Icon name="rocket" size={16} /></RailButton>
        <RailButton aria-label="选择" $on><Icon name="pointer" size={18} /></RailButton>
        <RailButton aria-label="属性" $color="#9ba3b4"><Icon name="sliders" size={16} /></RailButton>
        <RailButton aria-label="透视表" $color="#9ba3b4"><Icon name="pivot" size={16} /></RailButton>
        <RailButton aria-label="稻壳"><Icon name="store" size={16} /></RailButton>
        <RailButton aria-label="技巧"><Icon name="bulb" size={16} /></RailButton>
        <RailButton aria-label="查阅"><Icon name="book" size={16} /></RailButton>
        <Spacer />
        <RailFoot><Icon name="more" size={16} /></RailFoot>
    </Rail>
);
const Rail = styled.aside`
    display: flex;
    flex-direction: column;
    align-items: center;
    gap: 4px;
    width: 43px;
    padding: 11px 2px 0 0;
`;
const RailHandle = styled.div`
    width: 20px;
    height: 4px;
    margin-bottom: 9px;
    border: 1px solid #cdd1da;
    border-width: 1px 0;
`;
const RailButton = styled.button`
    display: grid;
    place-items: center;
    width: 32px;
    height: 32px;
    border-radius: 2px;
    color: ${({ $color }) => $color || DARK};
    background: ${({ $on }) => ($on ? '#d9dde5' : 'none')};
`;
const RailFoot = styled.div`
    display: flex;
    justify-content: center;
    width: 38px;
    height: 43px;
    padding-top: 17px;
    border-top: 1px solid #dfe2e8;
`;

/* status bar */
const StatusBar = () => (
    <Status>
        <Tool aria-label="宏">
            <svg width="17" height="17" viewBox="0 0 17 17" fill="none" stroke="#4c566e" aria-hidden="true">
                <path d="M8 10.500H.500v-9h15v6M3 12.500h5M10.500 9v5c0 2-3 2-3 .500M16 9.500h-3v3h3v3h-3M12.500 4v4" />
            </svg>
        </Tool>
        <Stats>
            <Rule $h={14} />
            <span>平均值=21.1</span>
            <span>计数=44</span>
            <span>求和=422</span>
        </Stats>
        <Spacer />
        <Tool aria-label="护眼模式"><Icon name="eye" size={16} /></Tool>
        <Tool aria-label="阅读模式"><Icon name="cross" size={16} /><Caret /></Tool>
        <Rule $h={14} />
        <Views>
            <ViewButton aria-label="普通视图" $on><Icon name="gridView" size={16} /></ViewButton>
            <ViewButton aria-label="页面布局视图"><Icon name="pageView" size={16} /></ViewButton>
            <ViewButton aria-label="分页预览"><Icon name="splitView" size={16} /></ViewButton>
        </Views>
        <Rule $h={14} />
        <Tool $gap={6}>145%<Caret /></Tool>
        <ZoomTools>
            <Tool aria-label="缩小"><Icon name="minimize" size={12} weight={2} /></Tool>
            <Zoom type="range" aria-label="显示比例" min="0" max="100" defaultValue="54" />
            <Tool aria-label="放大"><Icon name="plus" size={12} weight={2} /></Tool>
        </ZoomTools>
        <Tool aria-label="全屏"><Icon name="full" size={15} /></Tool>
    </Status>
);
const Status = styled.footer`
    display: flex;
    align-items: center;
    gap: 10px;
    height: 28px;
    padding: 0 15px;
    border-top: 1px solid #dfe2e8;
`;
const Stats = styled.div`
    display: flex;
    align-items: center;
    gap: 10px;
    padding-left: 4px;
`;
const Views = styled.div`
    display: flex;
    gap: 4px;
`;
const ViewButton = styled.button`
    display: grid;
    place-items: center;
    width: 22px;
    height: 24px;
    border-radius: 2px;
    background: ${({ $on }) => ($on ? '#d9dde5' : 'none')};
`;
const ZoomTools = styled.div`
    display: flex;
    align-items: center;
    gap: 10px;
`;
const Zoom = styled.input`
    appearance: none;
    width: 142px;
    height: 14px;
    margin: 0;
    background: linear-gradient(#47506a, #47506a) center / 100% 1px no-repeat;
    &::-webkit-slider-thumb {
        appearance: none;
        width: 13px;
        height: 13px;
        border: 1px solid #444;
        border-radius: 50%;
        background: #f0f0f0;
    }
`;

/* dialog */
const PivotDialog = () => (
    <Dialog role="dialog" aria-labelledby="pivot-title">
        <DialogTitle>
            <SheetLogo />
            <span id="pivot-title">创建数据透视表</span>
            <Spacer />
            <Tool aria-label="关闭对话框" $color="#000"><Icon name="close" size={12} /></Tool>
        </DialogTitle>
        <Legend>请选择要分析的数据</Legend>
        <Fields>
            <Choice><input type="radio" name="source" defaultChecked />请选择单元格区域(S):</Choice>
            <RangeField value="Sheet1!$A$1:$D$11" label="单元格区域" />
            <Choice><input type="radio" name="source" />使用外部数据源(U)</Choice>
            <Hint><WideButton disabled>选择连接(C)...</WideButton>未检索到数据字段。</Hint>
            <Choice><input type="radio" name="source" />使用多重合并计算区域(M)</Choice>
            <Hint><WideButton disabled>选定区域(R)...</WideButton>未检索到选中区域。</Hint>
            <Choice $off><input type="radio" name="source" disabled />使用另一个数据透视表(P):</Choice>
            <PivotList />
        </Fields>
        <Legend>请选择放置数据透视表的位置</Legend>
        <Fields $wide>
            <Choice><input type="radio" name="target" defaultChecked />新工作表(N)</Choice>
            <Choice><input type="radio" name="target" />现有工作表(E):</Choice>
            <RangeField value="" label="现有工作表位置" />
        </Fields>
        <Actions>
            <Tips href="#tips">
                <svg width="14" height="14" viewBox="0 0 14 14" fill="none" aria-hidden="true">
                    <circle cx="7" cy="7" r="6.500" stroke="#666" />
                    <path d="M5.500 4.500v5l4-2.500z" stroke={GREEN} />
                </svg>
                操作技巧
            </Tips>
            <ActionButton $primary>确定</ActionButton>
            <ActionButton>取消</ActionButton>
        </Actions>
        <Mark $x={2} $y={533} $w={117} $h={37} />
        <Mark $x={286} $y={613} $w={97} $h={62} />
    </Dialog>
);
const RangeField = ({ value, label }) => (
    <Range>
        <input type="text" aria-label={label} defaultValue={value} />
        <button aria-label={`选取${label}`}>
            <svg width="16" height="14" viewBox="0 0 16 14" aria-hidden="true">
                <rect x=".5" y=".5" width="15" height="13" fill="#dce9fb" stroke="#a9c4ef" />
                <path d="M8 5h8v9H8z" fill="#a9c6f5" />
                <path d="M0 4.500h15M0 9.500h15M7.500 0v14" stroke="#fff" />
                <path d="M0 0h7v4H0z" fill="#2b3990" />
                <path d="M1 2h5v1H1z" fill="#fff" />
                <path d="M7 4l6 4-2 .500 2 4-1.500 1-2-4L8 11z" fill="#a4533f" />
                <path d="M11 9l2 3.500-1.500 1z" fill="#222" />
            </svg>
        </button>
    </Range>
);
const Dialog = styled.div`
    position: absolute;
    z-index: 2;
    left: 711px;
    top: 173px;
    width: 470px;
    border: 1px solid #6b6e70;
    background: #f0f0f0;
    color: #000;
    box-shadow: 0 3px 16px rgba(0, 0, 0, 0.35);
`;
const DialogTitle = styled.div`
    display: flex;
    align-items: center;
    gap: 5px;
    height: 25px;
    padding: 0 9px 0 3px;
    background: #fff;
`;
const Legend = styled.div`
    display: flex;
    align-items: center;
    gap: 2px;
    margin: 6px 6px 0;
    &::after {
        content: '';
        flex: 1;
        height: 2px;
        border-top: 1px solid #a0a0a0;
        background: #fff;
    }
`;
const Fields = styled.div`
    display: flex;
    flex-direction: column;
    gap: 10px;
    padding: ${({ $wide }) => ($wide ? '9px 12px 14px' : '11px 15px 10px')};
`;
const Choice = styled.label`
    display: flex;
    align-items: center;
    gap: 6px;
    color: ${({ $off }) => ($off ? '#a0a0a0' : '#000')};
    input {
        appearance: none;
        width: 13px;
        height: 13px;
        margin: 0;
        border: 1px solid ${({ $off }) => ($off ? '#c8c8c8' : '#333')};
        border-radius: 50%;
        background: #fff;
    }
    input:checked { background: radial-gradient(circle, #333 3px, #fff 4px); }
`;
const Range = styled.div`
    display: flex;
    align-items: center;
    height: 21px;
    margin: 0 1px;
    padding: 0 2px 0 5px;
    background: #fff;
    input {
        flex: 1;
        min-width: 0;
        padding: 0;
        border: 0;
        outline: 0;
        background: none;
    }
    button {
        display: grid;
        place-items: center;
        width: 22px;
        height: 19px;
        border: 1px solid #a0a0a0;
        background: #e1e1e1;
    }
`;
const Hint = styled.div`
    display: flex;
    align-items: center;
    gap: 7px;
    height: 30px;
    margin: -1px 1px 0;
    color: #a0a0a0;
`;
const WideButton = styled.button`
    width: 214px;
    height: 30px;
    border: 1px solid #bfbfbf;
    background: #ccc;
    color: #a0a0a0;
`;
const PivotList = styled.div`
    height: 234px;
    margin-top: -2px;
    border: 1px solid #828790;
    background: #fff;
`;
const Actions = styled.div`
    display: flex;
    gap: 8px;
    padding: 0 7px 7px 10px;
`;
const Tips = styled.a`
    flex: 1;
    display: flex;
    align-items: center;
    gap: 6px;
    color: #4a90f0;
`;
const ActionButton = styled.button`
    width: 77px;
    height: 30px;
    border: ${({ $primary }) => ($primary ? '2px solid #0078d7' : '1px solid #adadad')};
    background: #e1e1e1;
`;
/* red frames that point at the two steps */
const Mark = styled.div`
    position: absolute;
    left: ${({ $x }) => $x}px;
    top: ${({ $y }) => $y}px;
    width: ${({ $w }) => $w}px;
    height: ${({ $h }) => $h}px;
    border: 3px solid #fe0000;
    box-shadow: 2px 3px 5px rgba(0, 0, 0, 0.6), inset 2px 3px 5px rgba(0, 0, 0, 0.6);
    pointer-events: none;
`;

const Watermark = () => (
    <>
        <Brand>
            <svg width="44" height="42" viewBox="0 0 44 42" aria-hidden="true">
                <defs>
                    <linearGradient id="brandBlue" x1="1" y1="0" x2="0" y2="1">
                        <stop offset="0" stopColor="#5cc4f5" />
                        <stop offset="1" stopColor="#2f6fb8" />
                    </linearGradient>
                    <linearGradient id="brandGreen" x1="1" y1="0" x2="0" y2="1">
                        <stop offset="0" stopColor="#3fb878" />
                        <stop offset="1" stopColor="#e6dc4a" />
                    </linearGradient>
                </defs>
                <path d="M44 1C26-1 4 8 1 24c-1 5 2 8 7 8C3 24 16 7 44 1z" fill="url(#brandBlue)" />
                <path d="M32 7C20 10 12 18 13 24c1 5 9 4 12 1 2-3-1-5-5-4-3 1-5-1-3-4 3-4 9-8 15-10z" fill="#4d96d6" />
                <path d="M34 14c9 1 9 12 0 19-8 6-19 8-30 7 14-1 25-6 28-13 2-4-1-6-6-5 1-4 4-7 8-8z" fill="url(#brandGreen)" />
            </svg>
            <BrandText>
                <b>极光下载站</b>
                <span>www.xz7.com</span>
            </BrandText>
        </Brand>
        <Meter />
    </>
);
const Brand = styled.div`
    position: absolute;
    z-index: 3;
    right: 11px;
    bottom: 7px;
    display: flex;
    align-items: center;
    opacity: 0.85;
    pointer-events: none;
`;
const BrandText = styled.div`
    display: flex;
    flex-direction: column;
    b {
        font-size: 21px;
        line-height: 24px;
        color: #5b9ad8;
    }
    span {
        font-family: "Liberation Sans", sans-serif;
        font-size: 16px;
        font-weight: bold;
        line-height: 20px;
        color: #5cc583;
    }
`;
const Meter = styled.div`
    position: absolute;
    z-index: 3;
    right: 0;
    bottom: 6px;
    width: 10px;
    height: 59px;
    border: 1px solid #33363f;
    border-right: 0;
    border-radius: 4px 0 0 4px;
    background:
        repeating-linear-gradient(#4b4f5c 0 1px, transparent 1px 3px) 3px 7px / 5px 45px no-repeat,
        linear-gradient(#2c2f38 0 13px, #e8cf3f 14px, #8fd66a 30px, #4fe0c8) 3px 7px / 5px 45px no-repeat,
        #4b4f5c;
`;
